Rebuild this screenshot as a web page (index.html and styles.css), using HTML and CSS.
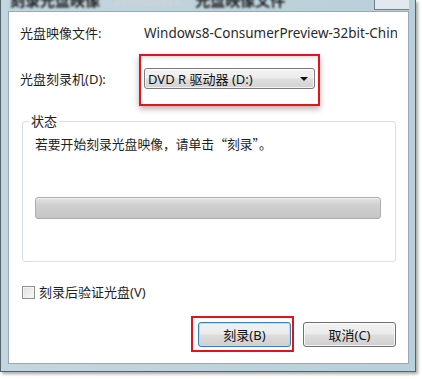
FILE: index.html
```html
<!DOCTYPE html>
<html lang="zh-CN">
<head>
<meta charset="utf-8">
<link rel="stylesheet" href="styles.css">
</head>
<body>
<div class="window">
  <div class="titlebar">
    <div class="title"><span class="t-dark">刻录光盘映像</span><span class="t-blur">Windows</span><span class="t-dark">光盘映像文件</span></div>
    <div class="close"></div>
  </div>
  <div class="content">
    <div class="row row-file">
      <span class="label">光盘映像文件:</span>
      <span class="value">Windows8-ConsumerPreview-32bit-Chinese.iso</span>
    </div>
    <div class="row row-drive">
      <span class="label">光盘刻录机(D):</span>
      <div class="combo"><span>DVD R 驱动器 (D:)</span><span class="arrow"></span></div>
    </div>
    <fieldset class="group">
      <legend>状态</legend>
      <p class="status">若要开始刻录光盘映像，请单击“刻录”。</p>
      <div class="progress"></div>
    </fieldset>
    <label class="verify"><span class="check"></span>刻录后验证光盘(V)</label>
    <div class="buttons">
      <button class="btn btn-default">刻录(B)</button>
      <button class="btn">取消(C)</button>
    </div>
    <div class="mark mark-drive"></div>
    <div class="mark mark-burn"></div>
  </div>
</div>
</body>
</html>
```

FILE: styles.css
```css
* { box-sizing: border-box; }
html, body { margin: 0; padding: 0; background: #ffffff; }
body {
  width: 422px;
  height: 379px;
  overflow: hidden;
  font-family: "Noto Sans", "Noto Sans CJK SC", sans-serif;
  font-size: 13px;
  color: #1e1e1e;
}
.window {
  width: 416px;
  height: 372px;
  border: 1px solid #58646d;
  border-top: none;
  background: linear-gradient(to right, #c2d6df, #b9cfd9);
  padding: 0 6px 7px 7px;
  display: flex;
  flex-direction: column;
  box-shadow: 2px 2px 3px rgba(0, 0, 0, 0.35);
}
.titlebar {
  height: 11px;
  display: flex;
  overflow: hidden;
}
.title {
  flex: 1;
  margin-top: -10px;
  font-family: "Noto Sans CJK SC", sans-serif;
  font-size: 15px;
  font-weight: bold;
  white-space: nowrap;
  line-height: 20px;
  padding-left: 2px;
}
.t-dark { color: #1a1a1a; filter: blur(0.8px); }
.t-blur { color: #cdd3d7; filter: blur(1.2px); margin: 0 14px; }
.close {
  width: 38px;
  height: 10px;
  border: 1px solid #6f7f89;
  border-top: none;
  background: #e1e9ee;
  margin-right: -3px;
}
.content {
  flex: 1;
  background: #ffffff;
  border: 1px solid #96a9b4;
  padding: 13px 11px 0 11px;
  display: flex;
  flex-direction: column;
  position: relative;
}
.row {
  display: grid;
  grid-template-columns: 124px 1fr;
  align-items: center;
}
.row-file { height: 16px; line-height: 16px; }
.value {
  white-space: nowrap;
  overflow: hidden;
  font-size: 13.5px;
  color: #2a2a2a;
}
.row-drive { margin-top: 27px; }
.combo {
  width: 171px;
  height: 21px;
  border: 1px solid #7a7a7a;
  border-radius: 3px;
  background: linear-gradient(to bottom, #f3f3f3 0%, #ececec 48%, #dfdfdf 52%, #d2d2d2 100%);
  display: flex;
  align-items: center;
  justify-content: space-between;
  padding: 0 6px 0 3px;
  font-size: 13px;
  color: #111;
  box-shadow: inset 0 0 0 1px rgba(255, 255, 255, 0.7);
}
.arrow {
  width: 0;
  height: 0;
  border-left: 4px solid transparent;
  border-right: 4px solid transparent;
  border-top: 4px solid #111;
}
.group {
  margin: 25px 1px 0 2px;
  border: 1px solid #d5dfe6;
  border-radius: 3px;
  padding: 8px 12px 42px 12px;
  min-width: 0;
}
.group legend {
  padding: 0 2px;
  margin-left: -6px;
  line-height: 14px;
  font-family: "Noto Sans CJK SC", sans-serif;
}
.status {
  margin: 0;
  line-height: 16px;
  font-family: "Noto Sans CJK SC", sans-serif;
  font-size: 12.8px;
}
.progress {
  margin-top: 45px;
  width: 346px;
  height: 22px;
  border: 1px solid #adadad;
  border-radius: 3px;
  background: linear-gradient(to bottom, #e2e2e2 0%, #cfcfcf 40%, #c6c6c6 100%);
  box-shadow: inset 0 1px 0 #f0f0f0;
}
.verify {
  margin: 22px 0 0 2px;
  display: flex;
  align-items: center;
  gap: 4px;
  line-height: 16px;
}
.check {
  width: 13px;
  height: 13px;
  border: 1px solid #8e8f8f;
  background: linear-gradient(135deg, #dcdcdc, #fbfbfb);
  box-shadow: inset 0 0 0 1px #f4f4f4;
}
.buttons {
  margin-top: 22px;
  display: flex;
  justify-content: flex-end;
  gap: 12px;
  padding-right: 1px;
}
.btn {
  width: 93px;
  height: 25px;
  border: 1px solid #707070;
  border-radius: 3px;
  background: linear-gradient(to bottom, #f2f2f2 0%, #ebebeb 48%, #dddddd 52%, #cfcfcf 100%);
  font-family: inherit;
  font-size: 13px;
  color: #111;
  padding: 0;
  box-shadow: inset 0 0 0 1px rgba(255, 255, 255, 0.75);
}
.btn-default {
  border-color: #3c7fb1;
  box-shadow: inset 0 0 0 1px #a6e4f9;
}
.mark {
  position: absolute;
  border: 2px solid #e0141b;
}
.mark-drive {
  left: 130px;
  top: 42px;
  width: 181px;
  height: 52px;
  box-shadow: 0 3px 6px rgba(0, 0, 0, 0.3), inset 0 4px 4px -2px rgba(0, 0, 0, 0.12);
}
.mark-burn {
  left: 182px;
  top: 304px;
  width: 103px;
  height: 36px;
}
```
